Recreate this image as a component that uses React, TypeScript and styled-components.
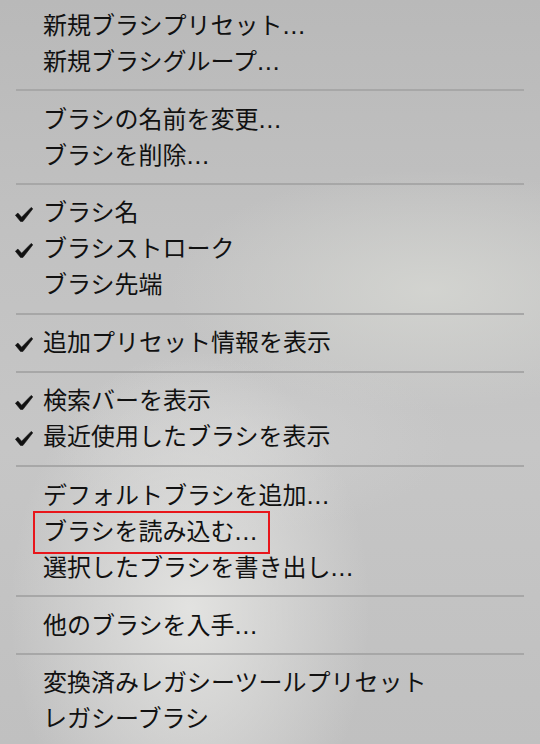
import React from "react";
import styled, { createGlobalStyle } from "styled-components";

const GlobalStyle = createGlobalStyle`
  html, body {
    margin: 0;
    padding: 0;
  }
  body {
    width: 540px;
    height: 744px;
    overflow: hidden;
    font-family: "Liberation Sans", "Noto Sans CJK JP", sans-serif;
  }
`;

type Item = { label: string; more?: boolean; checked?: boolean; marked?: boolean };

const groups: Item[][] = [
  [
    { label: "新規ブラシプリセット", more: true },
    { label: "新規ブラシグループ", more: true },
  ],
  [
    { label: "ブラシの名前を変更", more: true },
    { label: "ブラシを削除", more: true },
  ],
  [
    { label: "ブラシ名", checked: true },
    { label: "ブラシストローク", checked: true },
    { label: "ブラシ先端" },
  ],
  [{ label: "追加プリセット情報を表示", checked: true }],
  [
    { label: "検索バーを表示", checked: true },
    { label: "最近使用したブラシを表示", checked: true },
  ],
  [
    { label: "デフォルトブラシを追加", more: true },
    { label: "ブラシを読み込む", more: true, marked: true },
    { label: "選択したブラシを書き出し", more: true },
  ],
  [{ label: "他のブラシを入手", more: true }],
  [{ label: "変換済みレガシーツールプリセット" }, { label: "レガシーブラシ" }],
];

const Menu = styled.div`
  width: 540px;
  height: 744px;
  box-sizing: border-box;
  padding-top: 7px;
  background:
    radial-gradient(ellipse 180px 260px at 190px 610px, rgba(228, 228, 226, 0.95), rgba(228, 228, 226, 0) 100%),
    radial-gradient(ellipse 260px 120px at 430px 290px, rgba(212, 213, 209, 0.9), rgba(212, 213, 209, 0) 100%),
    radial-gradient(ellipse 200px 90px at 250px 440px, rgba(210, 210, 210, 0.6), rgba(210, 210, 210, 0) 100%),
    linear-gradient(180deg, #b9b9b9 0%, #c2c2c2 35%, #c6c6c6 60%, #c0c0c0 100%);
  color: #111;
  display: flex;
  flex-direction: column;
`;

const Group = styled.div`
  display: flex;
  flex-direction: column;
`;

const Separator = styled.div`
  height: 2px;
  margin: 10px 16px;
  background: #a7a7a7;
`;

const Row = styled.div`
  height: 36px;
  display: flex;
  align-items: center;
  padding-left: 15px;
`;

const CheckCell = styled.span`
  width: 28px;
  height: 36px;
  display: flex;
  align-items: center;
  svg {
    margin-top: 3px;
  }
`;

const Label = styled.span<{ $marked?: boolean }>`
  position: relative;
  font-size: 24px;
  line-height: 36px;
  white-space: nowrap;
  ${(p) =>
    p.$marked &&
    `
    &::after {
      content: "";
      position: absolute;
      left: -10px;
      right: -12px;
      top: -2px;
      bottom: -4px;
      border: 2px solid #e8161b;
    }
  `}
`;

const Dots = styled.span`
  font-family: "Liberation Sans", sans-serif;
  font-size: 26px;
  letter-spacing: 0.5px;
`;

const Check = () => (
  <svg width="18" height="15" viewBox="0 0 18 15">
    <path
      d="M0.4 8.2 L2.9 6.1 L6.6 10.2 L16.2 0.4 L17.8 1.8 L7.8 14.6 L5.6 14.6 Z"
      fill="#111"
      stroke="#111"
      strokeWidth="0.6"
      strokeLinejoin="round"
    />
  </svg>
);

export default function App() {
  return (
    <>
      <GlobalStyle />
      <Menu>
        {groups.map((g, gi) => (
          <React.Fragment key={gi}>
            {gi > 0 && <Separator />}
            <Group>
              {g.map((it) => (
                <Row key={it.label}>
                  <CheckCell>{it.checked && <Check />}</CheckCell>
                  <Label $marked={it.marked}>
                    {it.label}
                    {it.more && <Dots>...</Dots>}
                  </Label>
                </Row>
              ))}
            </Group>
          </React.Fragment>
        ))}
      </Menu>
    </>
  );
}
